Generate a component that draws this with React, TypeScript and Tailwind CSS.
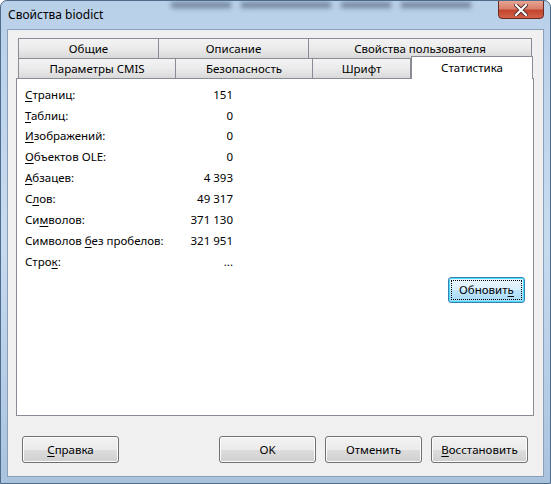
import React from "react";

const font = { fontFamily: '"Segoe UI", "Noto Sans", "Open Sans", sans-serif' };

function U({ children }: { children: React.ReactNode }) {
  return <span className="underline underline-offset-2">{children}</span>;
}

const stats: { label: React.ReactNode; value: string }[] = [
  { label: <><U>С</U>траниц:</>, value: "151" },
  { label: <><U>Т</U>аблиц:</>, value: "0" },
  { label: <><U>И</U>зображений:</>, value: "0" },
  { label: <><U>О</U>бъектов OLE:</>, value: "0" },
  { label: <><U>А</U>бзацев:</>, value: "4 393" },
  { label: <>С<U>л</U>ов:</>, value: "49 317" },
  { label: <>Си<U>м</U>волов:</>, value: "371 130" },
  { label: <>Символов <U>б</U>ез пробелов:</>, value: "321 951" },
  { label: <>Стро<U>к</U>:</>, value: "..." },
];

function Tab({ label, w, last }: { label: string; w: string; last?: boolean }) {
  return (
    <div
      className={`${w} h-[20px] flex items-center justify-center border-t border-l border-[#898c95] ${
        last ? "border-r" : ""
      } bg-gradient-to-b from-[#f3f3f3] via-[#ebebeb] to-[#d9d9d9] text-[11.5px] text-black`}
    >
      {label}
    </div>
  );
}

function Btn({ children, w = "w-[97px]" }: { children: React.ReactNode; w?: string }) {
  return (
    <div
      className={`${w} h-[27px] rounded-[3px] border border-[#707070] bg-[linear-gradient(to_bottom,#f2f2f2_0%,#ebebeb_50%,#dddddd_51%,#cfcfcf_100%)] shadow-[inset_0_0_0_1px_#fcfcfc] flex items-center justify-center text-[11.5px] text-black`}
    >
      {children}
    </div>
  );
}

export default function App() {
  return (
    <div
      className="w-[551px] h-[484px] overflow-hidden rounded-t-[7px] border border-[#4f6b8a] bg-gradient-to-b from-[#b9d0e9] via-[#c7dbf0] to-[#a9c3df]"
      style={font}
    >
      {/* Title bar */}
      <div className="relative h-[28px] flex items-start justify-between">
        {/* blurred window behind the glass */}
        <div className="absolute left-[170px] top-[1px] flex gap-[10px] blur-[2.5px] opacity-50">
          <div className="w-[60px] h-[6px] bg-[#2a3b52]" />
          <div className="w-[90px] h-[6px] bg-[#2a3b52]" />
          <div className="w-[50px] h-[6px] bg-[#2a3b52]" />
          <div className="w-[70px] h-[6px] bg-[#2a3b52]" />
        </div>
        <div className="relative pl-[7px] pt-[5px] text-[12px] text-black">Свойства biodict</div>
        <div className="relative mr-[6px] w-[46px] h-[19px] -mt-[1px] rounded-b-[4px] border border-[#6d2a22] bg-[linear-gradient(to_bottom,#e8a493_0%,#d8806c_45%,#c4452f_55%,#d2614a_100%)] flex items-center justify-center">
          <svg width="14" height="12" viewBox="0 0 14 12">
            <path d="M2 1 L12 11 M12 1 L2 11" stroke="#4a2a24" strokeWidth="4" strokeLinecap="square" />
            <path d="M2 1 L12 11 M12 1 L2 11" stroke="#ffffff" strokeWidth="2.2" strokeLinecap="square" />
          </svg>
        </div>
      </div>

      {/* Client area */}
      <div className="mx-[6px] h-[448px] border border-[#8aa0b8] bg-[#f0f0f0] flex flex-col px-[8px] pt-[8px]">
        {/* Tab control */}
        <div className="flex flex-col">
          <div className="flex pl-[2px]">
            <Tab label="Общие" w="w-[140px]" />
            <Tab label="Описание" w="w-[150px]" />
            <Tab label="Свойства пользователя" w="w-[224px]" last />
          </div>
          <div className="flex pl-[2px] items-start">
            <Tab label="Параметры CMIS" w="w-[157px]" />
            <Tab label="Безопасность" w="w-[137px]" />
            <Tab label="Шрифт" w="w-[99px]" last />
            <div className="relative z-10 w-[122px] h-[23px] -mt-[2px] -mb-[1px] border-t border-l border-r border-[#898c95] bg-white flex items-start justify-center pt-[2px] text-[11.5px] text-black">
              Статистика
            </div>
          </div>
          <div className="w-[518px] h-[338px] border border-[#898c95] bg-white flex flex-col pl-[8px] pr-[8px] pt-[5px]">
            <div className="w-[208px] flex flex-col">
              {stats.map((s, i) => (
                <div key={i} className="h-[20.85px] flex items-center justify-between text-[11.5px] text-black">
                  <span>{s.label}</span>
                  <span>{s.value}</span>
                </div>
              ))}
            </div>
            <div className="flex justify-end mt-[5px]">
              <div className="w-[77px] h-[26px] rounded-[3px] border border-[#3c7fb1] bg-[linear-gradient(to_bottom,#eaf6fd_0%,#d9f0fc_50%,#bee6fd_51%,#a7d9f5_100%)] shadow-[inset_0_0_0_1px_#48dffe] p-[2px]">
                <div className="w-full h-full border border-dotted border-black flex items-center justify-center text-[11.5px] text-black">
                  Обновит<U>ь</U>
                </div>
              </div>
            </div>
          </div>
        </div>

        {/* Bottom buttons */}
        <div className="flex mt-[20px] pl-[6px]">
          <Btn>
            <U>С</U>правка
          </Btn>
          <div className="ml-[100px] flex gap-[9px]">
            <Btn>OK</Btn>
            <Btn>Отменить</Btn>
            <Btn>
              <U>В</U>осстановить
            </Btn>
          </div>
        </div>
      </div>
    </div>
  );
}
